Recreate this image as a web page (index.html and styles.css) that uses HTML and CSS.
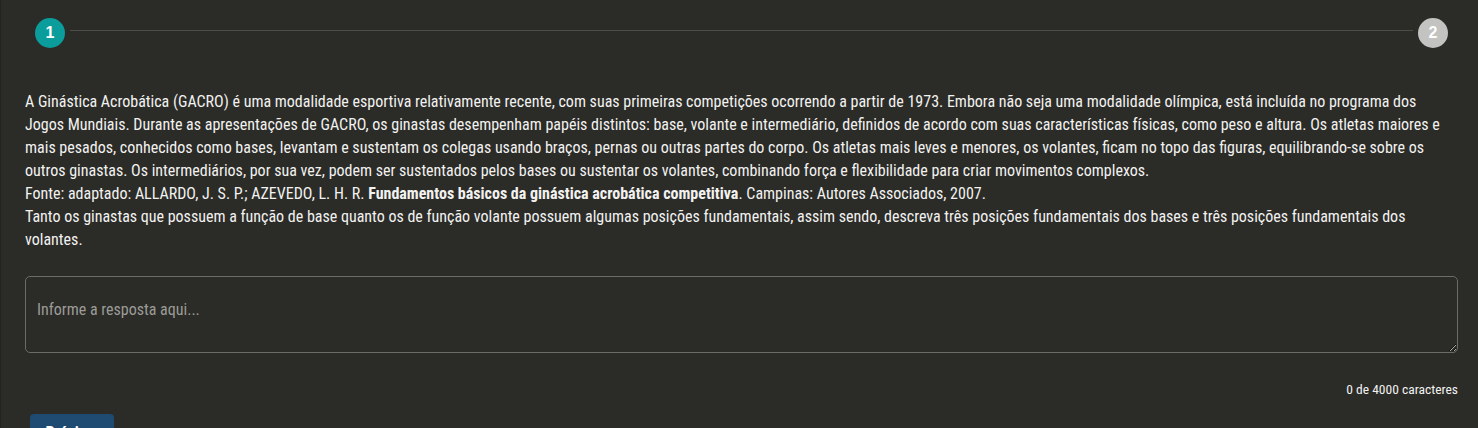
FILE: index.html
```html
<!DOCTYPE html>
<html lang="pt-BR">
<head>
<meta charset="utf-8">
<title>Questão</title>
<link rel="stylesheet" href="styles.css">
</head>
<body>
<main class="page">
  <div class="stepper">
    <span class="step step-active">1</span>
    <span class="step-line"></span>
    <span class="step step-next">2</span>
  </div>
  <div class="statement">
    <p>A Ginástica Acrobática (GACRO) é uma modalidade esportiva relativamente recente, com suas primeiras competições ocorrendo a partir de 1973. Embora não seja uma modalidade olímpica, está incluída no programa dos Jogos Mundiais. Durante as apresentações de GACRO, os ginastas desempenham papéis distintos: base, volante e intermediário, definidos de acordo com suas características físicas, como peso e altura. Os atletas maiores e mais pesados, conhecidos como bases, levantam e sustentam os colegas usando braços, pernas ou outras partes do corpo. Os atletas mais leves e menores, os volantes, ficam no topo das figuras, equilibrando-se sobre os outros ginastas. Os intermediários, por sua vez, podem ser sustentados pelos bases ou sustentar os volantes, combinando força e flexibilidade para criar movimentos complexos.</p>
    <p>Fonte: adaptado: ALLARDO, J. S. P.; AZEVEDO, L. H. R. <strong>Fundamentos básicos da ginástica acrobática competitiva</strong>. Campinas: Autores Associados, 2007.</p>
    <p>Tanto os ginastas que possuem a função de base quanto os de função volante possuem algumas posições fundamentais, assim sendo, descreva três posições fundamentais dos bases e três posições fundamentais dos volantes.</p>
  </div>
  <textarea class="answer" placeholder="Informe a resposta aqui..."></textarea>
  <div class="counter">0 de 4000 caracteres</div>
  <div class="actions">
    <button class="btn-next" type="button">Próximo</button>
  </div>
</main>
</body>
</html>
```

FILE: styles.css
```css
html, body {
  margin: 0;
  padding: 0;
  background: #2b2b27;
  height: 100%;
  overflow: hidden;
}
body {
  font-family: "Liberation Sans Narrow", "Roboto Condensed", "Liberation Sans", sans-serif;
  color: #f2f2f0;
  border-left: 1px solid #24241f;
}
.page {
  padding: 0 20px 0 24px;
}
.stepper {
  display: flex;
  align-items: center;
  padding: 18px 10px 0 10px;
  height: 30px;
}
.step {
  width: 30px;
  height: 30px;
  border-radius: 50%;
  display: flex;
  align-items: center;
  justify-content: center;
  font-family: "Liberation Sans", sans-serif;
  font-weight: bold;
  font-size: 16px;
  color: #fff;
  flex: none;
}
.step-active { background: #0a9d9c; }
.step-next { background: #c3c3c1; }
.step-line {
  flex: 1;
  height: 1px;
  background: #4d4d48;
  margin: 0 5px 5px;
}
.statement {
  margin-top: 42px;
  font-size: 16px;
  line-height: 23px;
}
.statement p { margin: 0; }
.statement strong { font-weight: bold; }
.answer {
  display: block;
  box-sizing: border-box;
  width: 100%;
  height: 77px;
  margin-top: 25px;
  background: #2b2b27;
  border: 1px solid #6c6c67;
  border-radius: 5px;
  padding: 23px 11px;
  font-family: inherit;
  font-size: 16px;
  color: #f2f2f0;
  resize: vertical;
  outline: none;
}
.answer::placeholder { color: #9c9c97; }
.counter {
  text-align: right;
  font-size: 13.5px;
  margin-top: 28px;
  line-height: 16px;
}
.actions {
  margin-top: 17px;
  padding-left: 5px;
}
.btn-next {
  width: 84px;
  height: 36px;
  background: #1f4a71;
  border: none;
  border-radius: 4px;
  color: #fff;
  font-family: inherit;
  font-weight: bold;
  font-size: 16px;
  padding: 8px 0;
}
```
